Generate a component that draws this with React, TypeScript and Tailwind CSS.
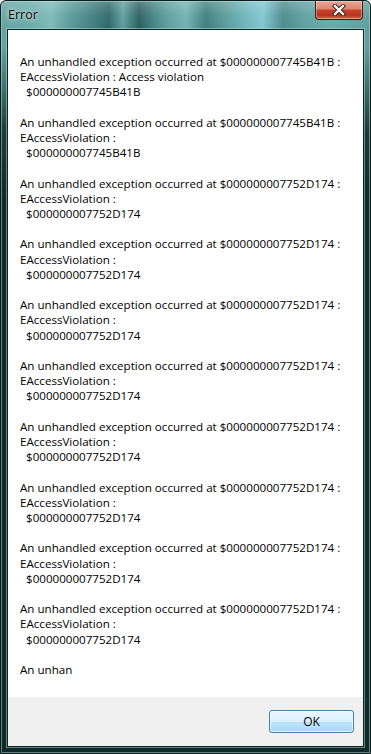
const message = [
  {
    addr: '$000000007745B41B',
    second: 'EAccessViolation : Access violation',
  },
  { addr: '$000000007745B41B', second: 'EAccessViolation :' },
  ...Array.from({ length: 8 }, () => ({ addr: '$000000007752D174', second: 'EAccessViolation :' })),
];

function CloseButton() {
  return (
    <div className="w-[48px] h-[19px] rounded-b-[4px] border border-t-0 border-[#4a1c14] bg-[linear-gradient(to_bottom,#eba595_0%,#dc8470_45%,#c8432a_50%,#b8361f_80%,#d96a4c_100%)] shadow-[inset_0_0_0_1px_rgba(255,255,255,0.35)] flex items-center justify-center">
      <svg width="14" height="12" viewBox="0 0 14 12">
        <path d="M3 2 L11 10 M11 2 L3 10" stroke="#3a1510" strokeWidth="4.2" strokeLinecap="square" fill="none" />
        <path d="M3 2 L11 10 M11 2 L3 10" stroke="#ffffff" strokeWidth="2.4" strokeLinecap="square" fill="none" />
      </svg>
    </div>
  );
}

export default function App() {
  return (
    <div className="w-[371px] h-[754px] bg-white">
      <div className="w-[371px] h-[754px] flex flex-col rounded-t-[6px] border border-[#0b1f1e] shadow-[inset_0_0_0_1px_rgba(200,230,225,0.45)] bg-[#0f2a28] bg-[linear-gradient(to_bottom,rgba(255,255,255,0.22)_0px,rgba(255,255,255,0.05)_14px,transparent_28px,transparent_45px,rgba(15,42,40,0.85)_130px,#0f2a28_200px,#0f2a28_100%),linear-gradient(to_right,#62a4a1_0px,#6aaba8_30px,#7db9b6_50px,#5a9a98_70px,#3d7a7a_95px,#2e6868_108px,#5f9f9d_122px,#2a5f5f_138px,#3f7f7e_150px,#5b9c9a_165px,#72b3b1_185px,#3f7e7d_205px,#5c9d9b_225px,#6fb6bb_245px,#80c6d0_262px,#4a8c8c_282px,#5fa2a2_305px,#6aa9a8_330px,#5d9e9c_371px)]">
        <div className="h-[28px] flex items-start justify-between pl-[7px] pr-[7px]">
          <span className="pt-[6px] text-[12.5px] leading-[16px] text-black font-['Open_Sans','Noto_Sans',sans-serif] [text-shadow:0_0_6px_rgba(255,255,255,0.9),0_0_2px_rgba(255,255,255,0.8)]">
            Error
          </span>
          <CloseButton />
        </div>
        <div className="flex-1 flex flex-col px-[6px] pb-[6px]">
          <div className="flex-1 flex flex-col border border-[#0c2422] shadow-[0_0_0_1px_rgba(190,220,215,0.5)] bg-white">
            <div className="flex-1 pt-[24px] pl-[12px] text-[11.6px] leading-[15.2px] text-black font-['Open_Sans','Noto_Sans',sans-serif]">
              {message.map((m, i) => (
                <div key={i} className="mb-[15.2px]">
                  <div>An unhandled exception occurred at {m.addr} :</div>
                  <div>{m.second}</div>
                  <div className="pl-[6px]">{m.addr}</div>
                </div>
              ))}
              <div>An unhan</div>
            </div>
            <div className="h-[49px] bg-[#f0f0f0] flex justify-end items-start pt-[13px] pr-[9px]">
              <button className="w-[85px] h-[23px] rounded-[3px] border border-[#3c7fb1] bg-[linear-gradient(to_bottom,#eaf6fd_0%,#d9f0fc_50%,#bee6fd_50%,#a7d9f5_100%)] shadow-[inset_0_0_0_1px_rgba(255,255,255,0.7)] text-[12px] leading-[21px] text-black font-['Open_Sans','Noto_Sans',sans-serif]">
                OK
              </button>
            </div>
          </div>
        </div>
      </div>
    </div>
  );
}
